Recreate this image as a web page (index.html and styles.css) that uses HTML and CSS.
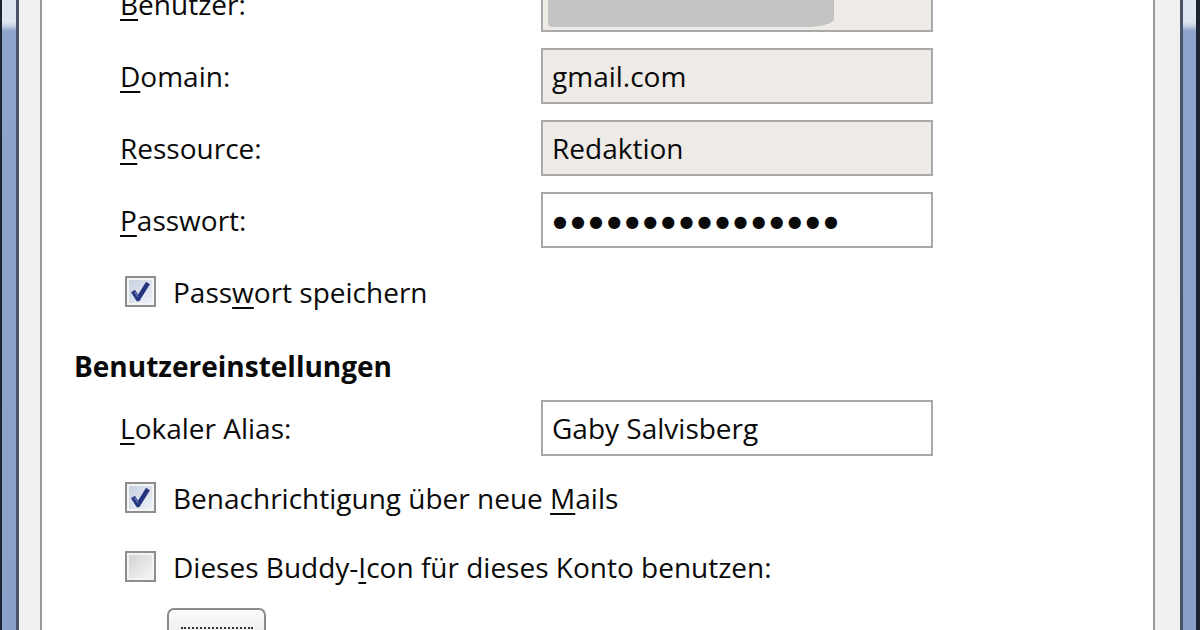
FILE: index.html
```html
<!DOCTYPE html>
<html lang="de">
<head>
<meta charset="utf-8">
<title>Konto bearbeiten</title>
<link rel="stylesheet" href="styles.css">
</head>
<body>
<div class="window">
  <div class="frame frame-left"></div>
  <div class="side side-left"></div>
  <main class="content">
    <div class="fields fields-login">
      <label class="label"><u>B</u>enutzer:</label>
      <div class="field disabled"><span class="censor"></span></div>
      <label class="label"><u>D</u>omain:</label>
      <div class="field disabled">gmail.com</div>
      <label class="label"><u>R</u>essource:</label>
      <div class="field disabled">Redaktion</div>
      <label class="label"><u>P</u>asswort:</label>
      <div class="field password">&#x25CF;&#x25CF;&#x25CF;&#x25CF;&#x25CF;&#x25CF;&#x25CF;&#x25CF;&#x25CF;&#x25CF;&#x25CF;&#x25CF;&#x25CF;&#x25CF;&#x25CF;&#x25CF;</div>
    </div>

    <div class="check-row row-save">
      <span class="box checked">
        <svg viewBox="0 0 31 31" width="31" height="31"><path d="M8 15 L13 23 L23 7" fill="none" stroke="#26357f" stroke-width="4.5" stroke-linejoin="round"/><path d="M9.5 15.5 L13 21" fill="none" stroke="#6c7bc0" stroke-width="1.2"/></svg>
      </span>
      <span class="check-text">Pass<u>w</u>ort speichern</span>
    </div>

    <h2 class="heading">Benutzereinstellungen</h2>

    <div class="fields fields-user">
      <label class="label"><u>L</u>okaler Alias:</label>
      <div class="field">Gaby Salvisberg</div>
    </div>

    <div class="check-row row-notify">
      <span class="box checked">
        <svg viewBox="0 0 31 31" width="31" height="31"><path d="M8 15 L13 23 L23 7" fill="none" stroke="#26357f" stroke-width="4.5" stroke-linejoin="round"/><path d="M9.5 15.5 L13 21" fill="none" stroke="#6c7bc0" stroke-width="1.2"/></svg>
      </span>
      <span class="check-text">Benachrichtigung über neue <u>M</u>ails</span>
    </div>

    <div class="check-row row-icon">
      <span class="box"></span>
      <span class="check-text">Dieses Buddy-<u>I</u>con für dieses Konto benutzen:</span>
    </div>

    <div class="button-row">
      <button class="icon-button"><span class="focus"></span></button>
    </div>
  </main>
  <div class="side side-right"></div>
  <div class="frame frame-right"></div>
</div>
</body>
</html>
```

FILE: styles.css
```css
html, body {
  margin: 0;
  padding: 0;
  width: 1200px;
  height: 630px;
  overflow: hidden;
  background: #ffffff;
}

.window {
  display: flex;
  width: 1200px;
  height: 630px;
  font-family: "Open Sans", "Noto Sans", sans-serif;
  font-size: 28px;
  color: #0a0a0a;
}

.frame {
  flex: none;
  background: linear-gradient(to bottom, #dfe6f2 0, #dfe6f2 22px, #c3cfe4 26px, #8da3c9 31px, #8aa0c8 100%);
}

.frame-left {
  width: 14px;
  border-left: 2px solid #1c2433;
  border-right: 3px solid #48546a;
}

.frame-right {
  width: 13px;
  border-left: 3px solid #48546a;
  border-right: 4px solid #1c2433;
}

.side {
  flex: none;
  background: #f1f0f1;
}

.side-left {
  width: 21px;
  border-right: 2px solid #979797;
}

.side-right {
  width: 25px;
  border-left: 2px solid #979797;
}

.content {
  flex: 1;
  min-width: 0;
  padding-left: 32px;
  display: flex;
  flex-direction: column;
  align-items: flex-start;
  background: #ffffff;
}

.fields {
  display: grid;
  grid-template-columns: 421px 392px;
  grid-auto-rows: 56px;
  row-gap: 16px;
  margin-left: 46px;
  align-items: center;
}

.fields-login {
  margin-top: -24px;
}

.fields-user {
  margin-top: 16px;
}

.label {
  line-height: 1;
  white-space: nowrap;
}

u {
  text-decoration-thickness: 2px;
  text-underline-offset: 4px;
}

.field {
  box-sizing: border-box;
  height: 56px;
  border: 2px solid #a9a9a9;
  background: #ffffff;
  display: flex;
  align-items: center;
  padding-left: 9px;
  white-space: nowrap;
  overflow: hidden;
}

.field.disabled {
  background: #eeebe7;
}

.field.password {
  font-family: "DejaVu Sans", sans-serif;
  font-size: 16px;
  letter-spacing: 4.1px;
  padding-left: 10px;
  padding-top: 2px;
}

.censor {
  align-self: stretch;
  width: 286px;
  margin-left: -4px;
  margin-bottom: 3px;
  background: #c3c3c3;
  border-radius: 0 0 30px 4px / 0 0 8px 4px;
}

.check-row {
  display: flex;
  align-items: center;
  height: 31px;
  margin-left: 51px;
  gap: 17px;
  white-space: nowrap;
}

.row-save {
  margin-top: 28px;
}

.row-notify {
  margin-top: 26px;
}

.row-icon {
  margin-top: 38px;
}

.box {
  box-sizing: border-box;
  flex: none;
  width: 31px;
  height: 31px;
  border: 2px solid #8e8e8e;
  background: linear-gradient(135deg, #d0d0d0 0%, #e8e8e8 60%, #f6f6f6 100%);
  box-shadow: inset 0 0 0 2px #f4f4f4;
  position: relative;
}

.box.checked {
  background: linear-gradient(135deg, #c4cde0 0%, #dfe4ee 60%, #f2f4f8 100%);
}

.box svg {
  position: absolute;
  left: -2px;
  top: -2px;
}

.check-text {
  line-height: 1;
}

.heading {
  margin: 41px 0 0 0;
  font-size: 28px;
  font-weight: 700;
  line-height: 36px;
}

.button-row {
  margin-top: 26px;
  margin-left: 93px;
}

.icon-button {
  box-sizing: border-box;
  width: 99px;
  height: 50px;
  border: 2px solid #8a8a8a;
  border-radius: 7px;
  background: linear-gradient(to bottom, #fbfbfb 0%, #eeeeee 50%, #dddddd 100%);
  padding: 17px 0 0 0;
  display: flex;
  justify-content: center;
  align-items: flex-start;
}

.focus {
  display: block;
  width: 72px;
  height: 0;
  border-top: 2px dotted #333333;
}
```
